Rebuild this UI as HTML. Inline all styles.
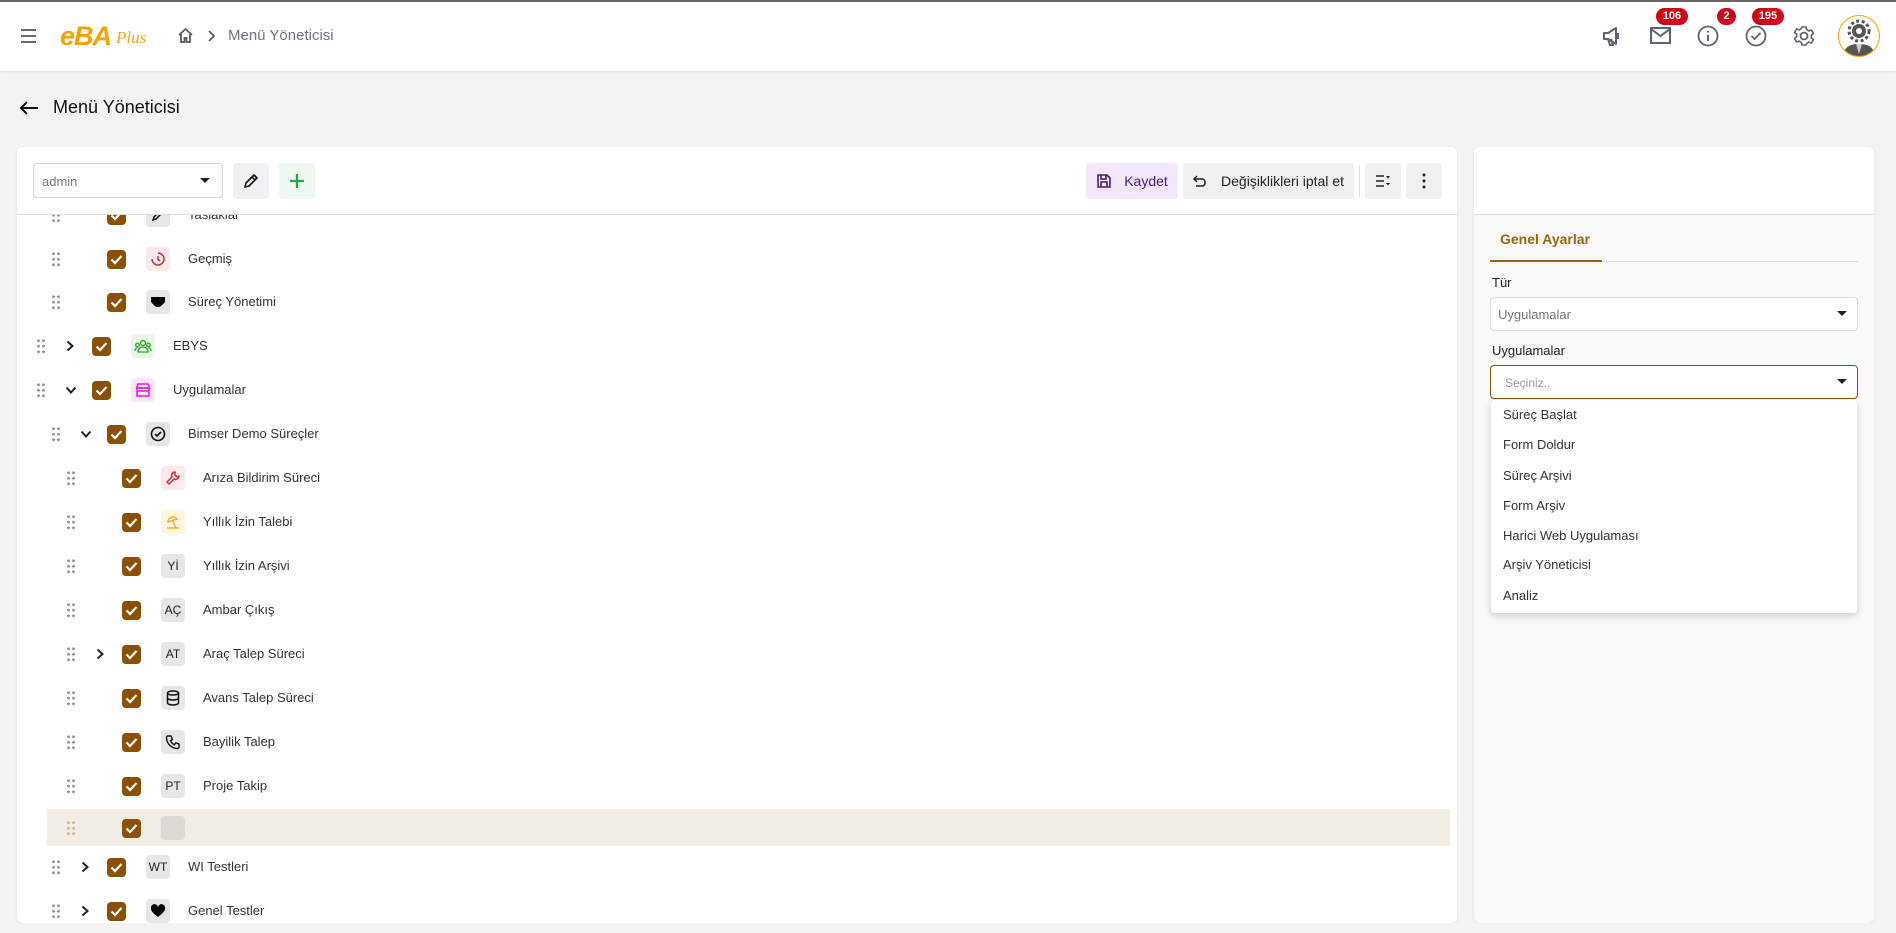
<!DOCTYPE html>
<html><head><meta charset="utf-8"><style>
*{box-sizing:border-box;margin:0;padding:0}
body{width:1896px;height:933px;background:#f3f3f3;font-family:"Liberation Sans",sans-serif;position:relative;overflow:hidden;color:#222}
.a{position:absolute}
.hdr{left:0;top:0;width:1896px;height:71px;background:#fff;border-top:2px solid #666;box-shadow:0 1px 2px rgba(0,0,0,.06)}
.card{background:#fff;border-radius:6px;box-shadow:0 1px 3px rgba(0,0,0,.08)}
.btn{border-radius:4px;background:#eef0f3;display:flex;align-items:center;justify-content:center}
.badge{background:#d0021b;color:#fff;font-size:11px;font-weight:bold;border-radius:9px;height:17px;text-align:center;line-height:17px}
.dots{width:10px;height:16px;background-image:radial-gradient(circle,#999 1.4px,transparent 1.6px);background-size:5px 5.5px}
.cb{width:19px;height:19px;background:#8b5000;border-radius:4px;display:flex;align-items:center;justify-content:center}
.ib{width:24px;height:24px;border-radius:4px;background:#e6e6e6;display:flex;align-items:center;justify-content:center;font-size:12px;color:#222}
.tx{font-size:13px;color:#333}
.tri{position:absolute;width:0;height:0;border-left:5px solid transparent;border-right:5px solid transparent;border-top:5px solid #222}
.dd div{position:absolute;left:12px;font-size:13px;color:#333}
</style></head><body>
<div class="a hdr"></div>
<svg class="a" style="left:20px;top:28px" width="18" height="16" viewBox="0 0 18 16"><path d="M1 2h15M1 8h15M1 14h15" stroke="#555" stroke-width="1.8"/></svg>
<div class="a" style="left:60px;top:21px;font-size:27px;font-weight:bold;font-style:italic;color:#f5a300;letter-spacing:-1px">eBA</div>
<div class="a" style="left:116px;top:28px;font-size:17px;font-style:italic;font-family:'Liberation Serif',serif;color:#f0a820">Plus</div>
<svg class="a" style="left:177px;top:27px" width="17" height="17" viewBox="0 0 17 17"><path d="M2 8L8.5 2 15 8M4 7v8h3.5v-4h2v4H13V7" fill="none" stroke="#555" stroke-width="1.7"/></svg>
<svg class="a" style="left:207px;top:30px" width="8" height="12" viewBox="0 0 8 12"><path d="M2 1l5 5-5 5" fill="none" stroke="#555" stroke-width="1.6"/></svg>
<div class="a" style="left:228px;top:27px;font-size:15px;color:#6b7280">Menü Yöneticisi</div>
<svg class="a" style="left:1601px;top:25px" width="22" height="22" viewBox="0 0 22 22"><path d="M3 8h4l8-5v16l-8-5H3zM7 14l2 6h3l-2-6M17 8v6" fill="none" stroke="#5b6470" stroke-width="2" stroke-linejoin="round"/></svg>
<svg class="a" style="left:1650px;top:27px" width="21" height="17" viewBox="0 0 21 17"><rect x="1" y="1" width="19" height="15" fill="none" stroke="#5b6470" stroke-width="2"/><path d="M1 2l9.5 7L20 2" fill="none" stroke="#5b6470" stroke-width="2"/></svg>
<svg class="a" style="left:1697px;top:25px" width="22" height="22" viewBox="0 0 22 22"><circle cx="11" cy="11" r="9.5" fill="none" stroke="#5b6470" stroke-width="1.8"/><path d="M11 10v6M11 6v1.5" stroke="#5b6470" stroke-width="2"/></svg>
<svg class="a" style="left:1745px;top:25px" width="22" height="22" viewBox="0 0 22 22"><circle cx="11" cy="11" r="9.5" fill="none" stroke="#5b6470" stroke-width="1.8"/><path d="M6.5 11l3 3 6-6" fill="none" stroke="#5b6470" stroke-width="1.8"/></svg>
<svg class="a" style="left:1793px;top:25px" width="22" height="22" viewBox="0 0 22 22"><circle cx="11" cy="11" r="3.5" fill="none" stroke="#5b6470" stroke-width="1.8"/><path d="M9 2h4l.6 2.6 2.3 1.3 2.5-.9 2 3.4-2 1.8v2.6l2 1.8-2 3.4-2.5-.9-2.3 1.3L13 20H9l-.6-2.6-2.3-1.3-2.5.9-2-3.4 2-1.8V9.2l-2-1.8 2-3.4 2.5.9 2.3-1.3z" fill="none" stroke="#5b6470" stroke-width="1.6" stroke-linejoin="round"/></svg>
<div class="a badge" style="left:1656px;top:8px;width:32px">106</div>
<div class="a badge" style="left:1717px;top:8px;width:19px">2</div>
<div class="a badge" style="left:1752px;top:8px;width:32px">195</div>
<div class="a" style="left:1838px;top:15px;width:42px;height:42px;border-radius:50%;border:1.5px solid #f5a300;background:#fff;overflow:hidden">
<svg width="40" height="40" viewBox="0 0 40 40"><path d="M4 40c1-9 7-12 16-12s15 3 16 12z" fill="#555"/><path d="M17 28l3 10 3-10z" fill="#ccc"/><circle cx="20" cy="15" r="7" fill="#555"/><circle cx="20" cy="15" r="10" fill="none" stroke="#555" stroke-width="3" stroke-dasharray="3 2.5"/><circle cx="20" cy="15" r="3" fill="#fff"/></svg></div>
<svg class="a" style="left:19px;top:100px" width="20" height="16" viewBox="0 0 20 16"><path d="M19 8H2M8 2L2 8l6 6" fill="none" stroke="#111" stroke-width="2"/></svg>
<div class="a" style="left:53px;top:97px;font-size:18px;color:#111">Menü Yöneticisi</div>
<div class="a card" style="left:17px;top:147px;width:1440px;height:776px;overflow:hidden"></div>
<div class="a" style="left:47px;top:809px;width:1403px;height:37px;background:#f1ece4"></div>
<div id="tree"></div>
<script>
const CK='<svg width="13" height="11" viewBox="0 0 13 11"><path d="M1.5 5.5l3.5 3.5 6.5-7" fill="none" stroke="#fff" stroke-width="2.2"/></svg>';
const ic={
pen:'<svg width="14" height="14" viewBox="0 0 14 14"><path d="M2 12l1-3 6-6 2 2-6 6z" fill="none" stroke="#111" stroke-width="1.5"/></svg>',
hist:'<svg width="16" height="16" viewBox="0 0 16 16"><path d="M8 2a6 6 0 11-6 6" fill="none" stroke="#c0304a" stroke-width="1.5"/><path d="M8 5v3.5l2 1.5" fill="none" stroke="#c0304a" stroke-width="1.5"/></svg>',
mask:'<svg width="16" height="12" viewBox="0 0 16 12"><path d="M1 1h14v5c-2 2-4 5-7 5S3 8 1 6z" fill="#000"/></svg>',
grp:'<svg width="18" height="16" viewBox="0 0 18 16"><circle cx="9" cy="5" r="2.5" fill="none" stroke="#2eaa2e" stroke-width="1.4"/><circle cx="3.5" cy="7" r="1.8" fill="none" stroke="#2eaa2e" stroke-width="1.3"/><circle cx="14.5" cy="7" r="1.8" fill="none" stroke="#2eaa2e" stroke-width="1.3"/><path d="M4 14c0-3 2-5 5-5s5 2 5 5zM1 13c0-2 1-3 2.5-3M17 13c0-2-1-3-2.5-3" fill="none" stroke="#2eaa2e" stroke-width="1.3"/></svg>',
shop:'<svg width="16" height="16" viewBox="0 0 16 16"><rect x="2" y="6" width="12" height="8" fill="none" stroke="#e01ad0" stroke-width="1.5"/><path d="M1.5 6l1.5-4h10l1.5 4zM2 9h12" fill="none" stroke="#e01ad0" stroke-width="1.5"/></svg>',
circk:'<svg width="16" height="16" viewBox="0 0 16 16"><circle cx="8" cy="8" r="6.5" fill="none" stroke="#111" stroke-width="1.6"/><path d="M5 8l2 2 4-4" fill="none" stroke="#111" stroke-width="1.6"/></svg>',
wr:'<svg width="16" height="16" viewBox="0 0 16 16"><path d="M10 2a3.5 3.5 0 00-3 5L2 12l2 2 5-5a3.5 3.5 0 005-3l-2 1-2-2z" fill="none" stroke="#d42a3a" stroke-width="1.5" stroke-linejoin="round"/></svg>',
um:'<svg width="16" height="16" viewBox="0 0 16 16"><path d="M3 8a5 5 0 019-3zM7.5 6.5L11 14M2 14h12" fill="none" stroke="#f0b030" stroke-width="1.5"/></svg>',
db:'<svg width="14" height="16" viewBox="0 0 14 16"><ellipse cx="7" cy="3" rx="5.5" ry="2" fill="none" stroke="#111" stroke-width="1.5"/><path d="M1.5 3v10c0 1 2.5 2 5.5 2s5.5-1 5.5-2V3M1.5 8c0 1 2.5 2 5.5 2s5.5-1 5.5-2" fill="none" stroke="#111" stroke-width="1.5"/></svg>',
ph:'<svg width="16" height="16" viewBox="0 0 16 16"><path d="M3 2h3l1.5 3.5-2 1.3a8 8 0 004 4l1.3-2L14 10v3a1.5 1.5 0 01-1.5 1.5A11 11 0 011.5 3.5 1.5 1.5 0 013 2z" fill="none" stroke="#111" stroke-width="1.4"/></svg>',
heart:'<svg width="16" height="14" viewBox="0 0 16 14"><path d="M8 13C3 9 1 7 1 4.5A3.5 3.5 0 018 3a3.5 3.5 0 017 1.5C15 7 13 9 8 13z" fill="#000"/></svg>'};
const rows=[
[215,2,0,'pen','','Taslaklar'],[259,2,0,'hist','#fbe9ec','Geçmiş'],[302,2,0,'mask','','Süreç Yönetimi'],
[346,1,'>','grp','#eaf7e8','EBYS'],[390,1,'v','shop','#fde6fb','Uygulamalar'],[434,2,'v','circk','','Bimser Demo Süreçler'],
[478,3,0,'wr','#fde8ea','Arıza Bildirim Süreci'],[522,3,0,'um','#fff6e0','Yıllık İzin Talebi'],[566,3,0,'Yİ','','Yıllık İzin Arşivi'],
[610,3,0,'AÇ','','Ambar Çıkış'],[654,3,'>','AT','','Araç Talep Süreci'],[698,3,0,'db','','Avans Talep Süreci'],
[742,3,0,'ph','','Bayilik Talep'],[786,3,0,'PT','','Proje Takip'],[828,3,0,'','#dcd9d5',''],
[867,2,'>','WT','','WI Testleri'],[911,2,'>','heart','','Genel Testler']];
let h='';
rows.forEach(r=>{const [y,l,ch,i,bg,t]=r;const o=(l-1)*15;
const dc=y==828?'#d4b48c':'#999';
h+=`<div class="a dots" style="left:${36+o}px;top:${y-8}px;background-image:radial-gradient(circle,${dc} 1.4px,transparent 1.6px)"></div>`;
if(ch){h+=ch=='>'?`<svg class="a" style="left:${66+o}px;top:${y-6}px" width="8" height="12" viewBox="0 0 8 12"><path d="M1.5 1.5l5 4.5-5 4.5" fill="none" stroke="#222" stroke-width="2"/></svg>`:`<svg class="a" style="left:${65+o}px;top:${y-4}px" width="12" height="8" viewBox="0 0 12 8"><path d="M1.5 1.5l4.5 5 4.5-5" fill="none" stroke="#222" stroke-width="2"/></svg>`}
h+=`<div class="a cb" style="left:${92+o}px;top:${y-9}px">${CK}</div>`;
h+=`<div class="a ib" style="left:${131+o}px;top:${y-12}px;${bg?'background:'+bg:''}">${ic[i]||i}</div>`;
h+=`<div class="a tx" style="left:${173+o}px;top:${y-8}px">${t}</div>`;});
document.getElementById('tree').innerHTML=h;
</script>
<div class="a" style="left:17px;top:147px;width:1440px;height:67px;background:#fff;border-radius:6px 6px 0 0;z-index:2"></div>
<div class="a" style="left:17px;top:214px;width:1440px;height:1px;background:#ddd;z-index:2"></div>
<div class="a" style="left:0;top:923px;width:1896px;height:10px;background:#f3f3f3;z-index:2"></div>
<div class="a" style="left:33px;top:163px;width:190px;height:35px;border:1px solid #d4d4d4;border-radius:4px;z-index:3;background:#fff"><span class="a" style="left:8px;top:10px;font-size:13px;color:#777">admin</span><span class="tri" style="left:166px;top:14px"></span></div>
<div class="a btn" style="left:233px;top:163px;width:36px;height:36px;z-index:3"><svg width="18" height="18" viewBox="0 0 18 18"><path d="M3 15l1-4 8-8 3 3-8 8zM10 5l3 3" fill="none" stroke="#111" stroke-width="1.6" stroke-linejoin="round"/></svg></div>
<div class="a btn" style="left:279px;top:163px;width:36px;height:36px;z-index:3;background:#eef8f0"><svg width="18" height="18" viewBox="0 0 18 18"><path d="M9 2v14M2 9h14" stroke="#22a846" stroke-width="2.2"/></svg></div>
<div class="a btn" style="left:1086px;top:163px;width:92px;height:36px;z-index:3;background:#f3e8fb;color:#4b1a7a;font-size:14px"><svg width="16" height="16" viewBox="0 0 16 16" style="margin-right:12px"><path d="M2 2h9l3 3v9H2zM5 2v4h5V2M5 14v-5h6v5" fill="none" stroke="#4b1a7a" stroke-width="1.6"/></svg>Kaydet</div>
<div class="a btn" style="left:1183px;top:163px;width:171px;height:36px;z-index:3;color:#222;font-size:14px"><svg width="16" height="12" viewBox="0 0 16 12" style="margin-right:12px"><path d="M4 1L1 4l3 3M1 4h9a4 4 0 010 7H3" fill="none" stroke="#222" stroke-width="1.5"/></svg>Değişiklikleri iptal et</div>
<div class="a" style="left:1359px;top:165px;width:1px;height:32px;background:#ddd;z-index:3"></div>
<div class="a btn" style="left:1365px;top:163px;width:36px;height:36px;z-index:3"><svg width="16" height="14" viewBox="0 0 16 14"><path d="M1 2h8M1 7h8M1 12h8" stroke="#222" stroke-width="1.6"/><path d="M11 2h4l-2 2.5zM11 9h4l-2 2.5z" fill="#222"/></svg></div>
<div class="a btn" style="left:1406px;top:163px;width:36px;height:36px;z-index:3"><svg width="4" height="16" viewBox="0 0 4 16"><circle cx="2" cy="2" r="1.5" fill="#222"/><circle cx="2" cy="8" r="1.5" fill="#222"/><circle cx="2" cy="14" r="1.5" fill="#222"/></svg></div>
<div class="a card" style="left:1474px;top:147px;width:400px;height:776px;background:#f9f9f9;overflow:hidden">
 <div class="a" style="left:0;top:0;width:400px;height:68px;background:#fff;border-bottom:1px solid #ddd"></div>
 <div class="a" style="left:26px;top:84px;font-size:14px;font-weight:bold;color:#9a6512">Genel Ayarlar</div>
 <div class="a" style="left:16px;top:114px;width:368px;height:1px;background:#ddd"></div>
 <div class="a" style="left:16px;top:113px;width:112px;height:2px;background:#9a6512"></div>
 <div class="a" style="left:18px;top:128px;font-size:13px;color:#222">Tür</div>
 <div class="a" style="left:16px;top:150px;width:368px;height:34px;background:#fff;border:1px solid #ddd;border-radius:4px"><span class="a" style="left:7px;top:9px;font-size:13px;color:#777">Uygulamalar</span><span class="tri" style="left:346px;top:13px"></span></div>
 <div class="a" style="left:18px;top:196px;font-size:13px;color:#222">Uygulamalar</div>
 <div class="a" style="left:16px;top:218px;width:368px;height:34px;background:#fff;border:1px solid #8b5000;border-radius:4px"><span class="a" style="left:14px;top:10px;font-size:12px;color:#999">Seçiniz..</span><span class="tri" style="left:346px;top:13px"></span></div>
 <div class="a dd" style="left:17px;top:253px;width:366px;height:213px;background:#fff;border-radius:4px;box-shadow:0 3px 8px rgba(0,0,0,.18)">
  <div style="top:7px">Süreç Başlat</div><div style="top:37px">Form Doldur</div><div style="top:68px">Süreç Arşivi</div><div style="top:98px">Form Arşiv</div><div style="top:128px">Harici Web Uygulaması</div><div style="top:157px">Arşiv Yöneticisi</div><div style="top:188px">Analiz</div>
 </div>
</div>
</body></html>
